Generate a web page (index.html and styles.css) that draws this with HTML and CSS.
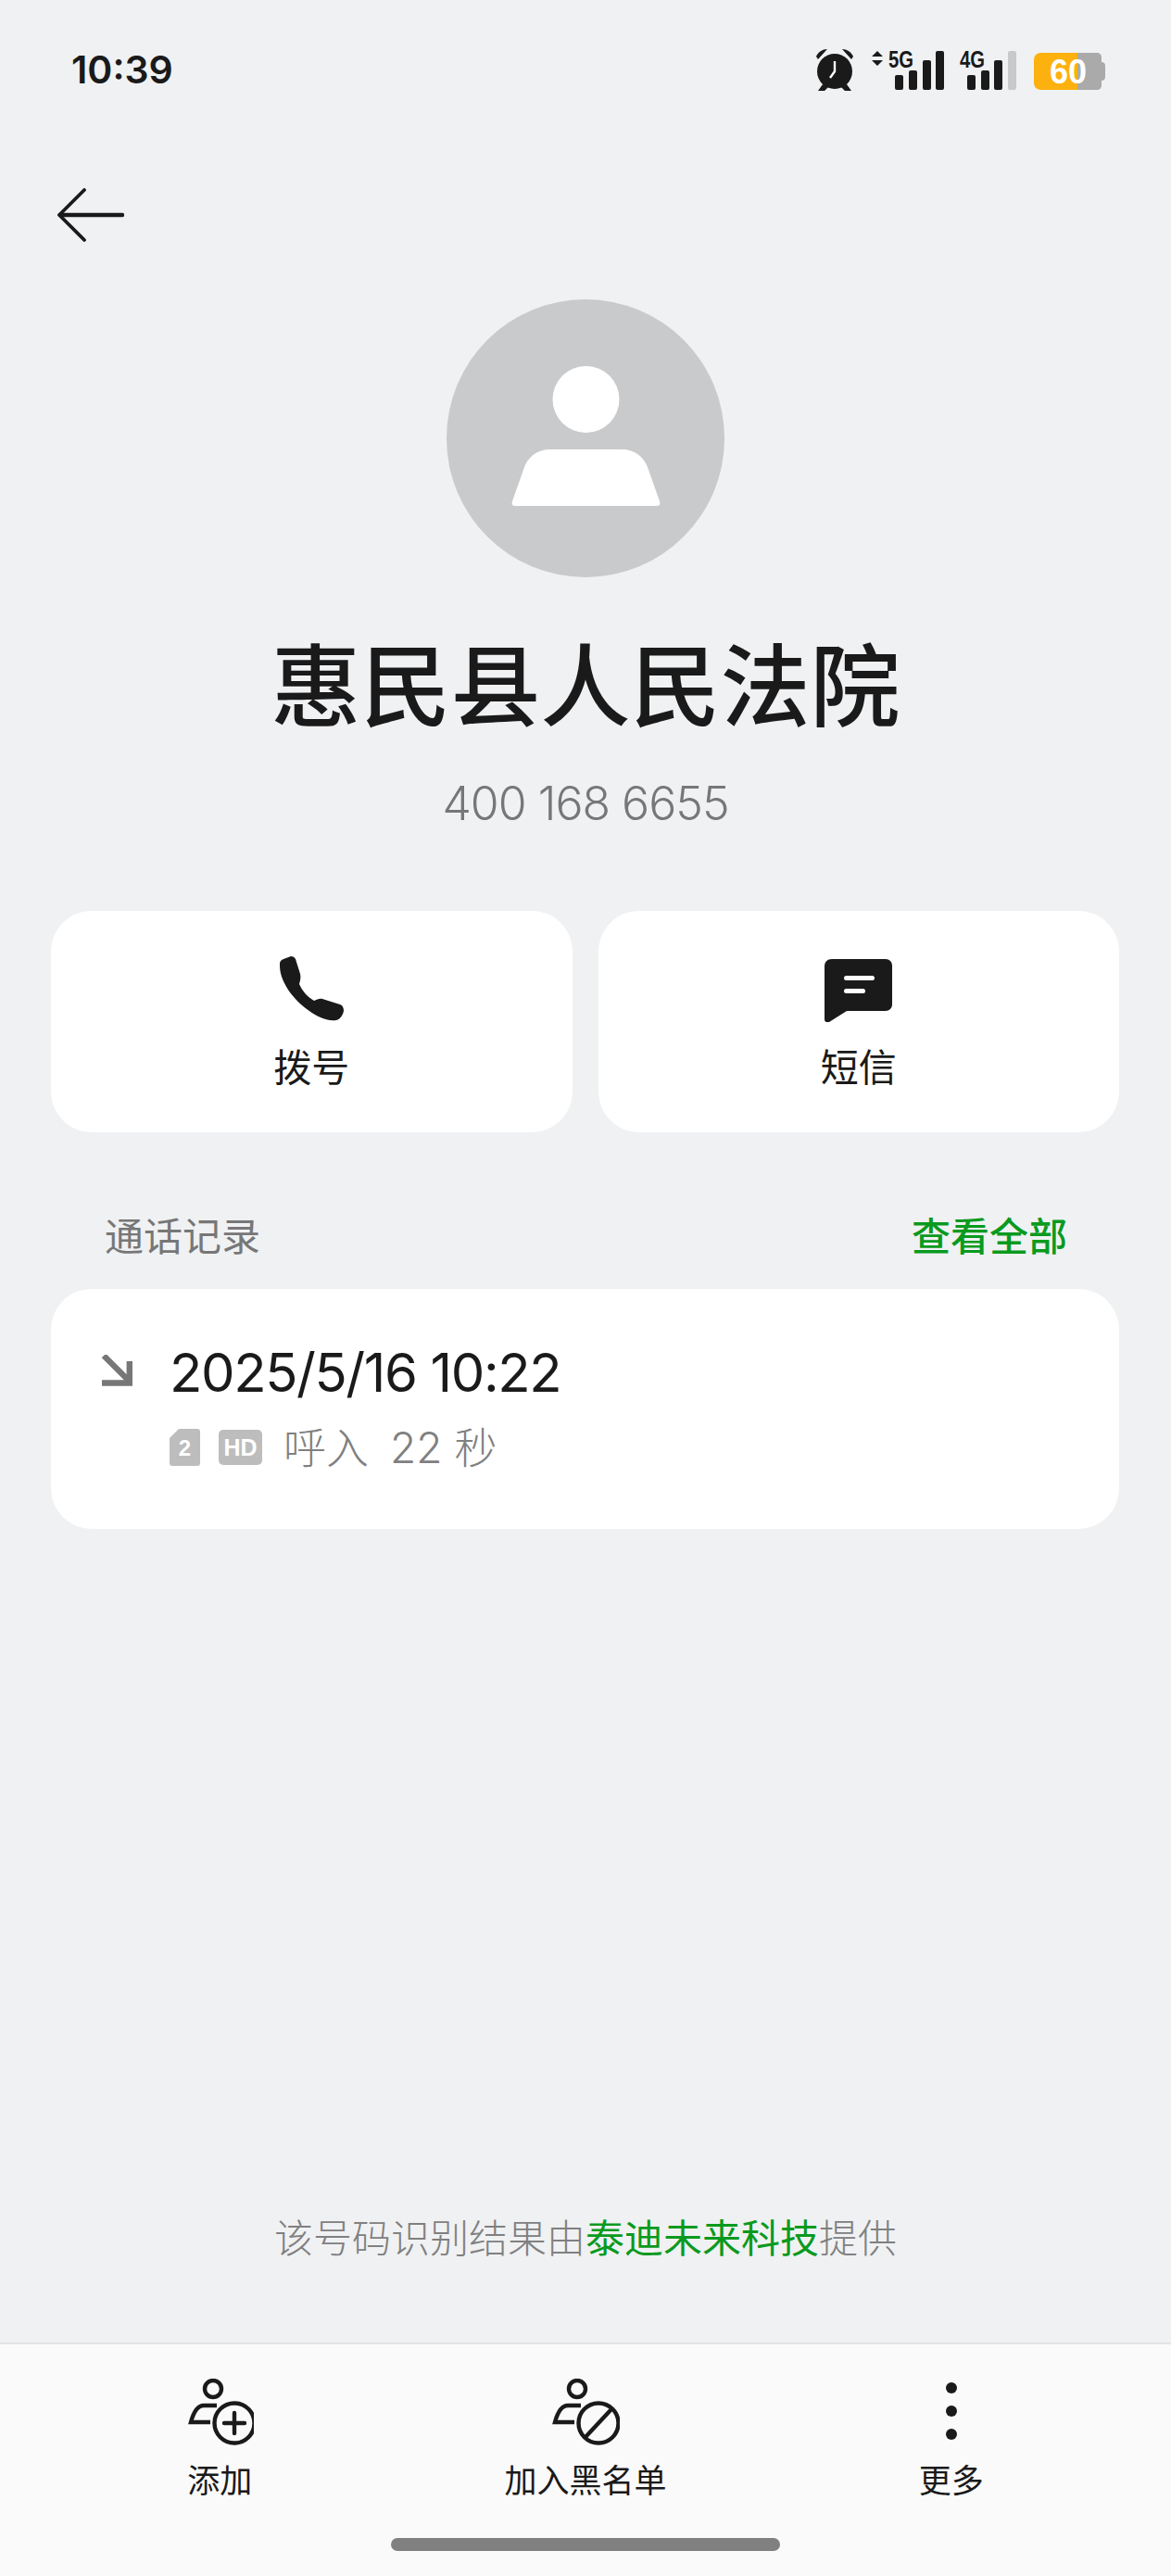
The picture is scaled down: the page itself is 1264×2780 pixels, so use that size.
FILE: index.html
```html
<!DOCTYPE html>
<html lang="zh-CN">
<head>
    <meta charset="UTF-8">
    <meta name="viewport" content="width=device-width, initial-scale=1.0">
    <title>通话详情</title>
    <link rel="stylesheet" href="styles.css">
</head>
<body>
    <div class="page">
        <div class="status-bar">
            <span class="status-time">10:39</span>
            <svg class="status-icons" width="314" height="50" viewBox="880 50 314 50">
                <!-- alarm -->
                <circle cx="901" cy="77" r="19" fill="#1a1a1a"/>
                <path d="M881 61c2-5 7-8 12-8l-10 11zM921 61c-2-5-7-8-12-8l10 11zM888 91l-5 7h7l5-5zM914 91l5 7h-7l-5-5z" fill="#1a1a1a"/>
                <path d="M901 66v11l-5 7" fill="none" stroke="#fff" stroke-width="2.4"/>
                <!-- 5G -->
                <path d="M947 55l6 6h-12zM947 71l6-6h-12z" fill="#1a1a1a"/>
                <text class="net-label" x="959" y="73" textLength="27" lengthAdjust="spacingAndGlyphs">5G</text>
                <rect class="bar" x="966" y="81" width="9" height="16" rx="2"/>
                <rect class="bar" x="981" y="76" width="9" height="21" rx="2"/>
                <rect class="bar" x="996" y="65" width="9" height="32" rx="2"/>
                <rect class="bar" x="1010" y="55" width="9" height="42" rx="2"/>
                <!-- 4G -->
                <text class="net-label" x="1036" y="73" textLength="27" lengthAdjust="spacingAndGlyphs">4G</text>
                <rect class="bar" x="1044" y="81" width="9" height="16" rx="2"/>
                <rect class="bar" x="1059" y="76" width="9" height="21" rx="2"/>
                <rect class="bar" x="1073" y="65" width="9" height="32" rx="2"/>
                <rect class="bar bar-off" x="1088" y="55" width="9" height="42" rx="2"/>
                <!-- battery -->
                <path d="M1163 57h21c3 0 5 2 5 5v5c3 0 4 2 4 4v12c0 2-1 4-4 4v5c0 3-2 5-5 5h-21z" fill="#aaa"/>
                <path d="M1163 57h-39c-5 0-8 3-8 8v24c0 5 3 8 8 8h39z" fill="#fdb10e"/>
                <text class="battery-label" x="1153" y="90">60</text>
            </svg>
        </div>

        <div class="top-bar">
            <svg width="72" height="58" viewBox="0 0 72 58" fill="none" stroke="#1a1a1a" stroke-linecap="round" stroke-linejoin="round">
                <path d="M29 2L2 29l27 27" stroke-width="3.8"/>
                <path d="M3 29h67" stroke-width="4.5"/>
            </svg>
        </div>

        <div class="profile">
            <div class="avatar">
                <svg width="161" height="151" viewBox="0 0 161 151" fill="#fff">
                    <circle cx="80.500" cy="36" r="36"/>
                    <path d="M4 151c-3 0-4-2-3-5l12-34c4-14 15-22 29-22h77c14 0 25 8 29 22l12 34c1 3 0 5-3 5z"/>
                </svg>
            </div>
            <h1 class="name">惠民县人民法院</h1>
            <div class="number">400 168 6655</div>
        </div>

        <div class="actions">
            <div class="action-card">
                <svg width="74" height="72" viewBox="-2 -1 74 72" fill="#1a1a1a">
                    <path d="M1 8C1 5 3 4 5 3L13 0C15 0 17 1 18 3L23 19C24 23 23 26 22 30C25 37 31 44 38 48C41 47 44 45 47 46L66 52C69 53 70 56 70 59C69 64 66 68 62 69C56 70 50 68 45 66C28 58 10 42 3 22C1 16 1 12 1 8Z"/>
                </svg>
                <span class="action-label">拨号</span>
            </div>
            <div class="action-card">
                <svg width="74" height="72" viewBox="0 -4 74 72">
                    <path d="M8 0H66C70 0 73 3 73 7V49C73 53 70 56 66 56H24L5 68C3 69 0 68 0 65V8C0 3 3 0 8 0Z" fill="#1a1a1a"/>
                    <rect x="21" y="18" width="33" height="5" rx="2.500" fill="#fff"/>
                    <rect x="21" y="32" width="23" height="5" rx="2.500" fill="#fff"/>
                </svg>
                <span class="action-label">短信</span>
            </div>
        </div>

        <div class="section-head">
            <span class="section-title">通话记录</span>
            <span class="section-link">查看全部</span>
        </div>

        <div class="call-card">
            <svg class="call-arrow" width="34" height="34" viewBox="0 0 34 34" fill="none" stroke="#777" stroke-width="6.4">
                <path d="M3 1l27 27"/>
                <path d="M1 30.500h29.800V7"/>
            </svg>
            <div class="call-info">
                <div class="call-date">2025/5/16 10:22</div>
                <div class="call-meta">
                    <svg class="sim-icon" width="33" height="40" viewBox="0 0 33 40">
                        <path d="M10 0h20c2 0 3 1 3 3v34c0 2-1 3-3 3H3c-2 0-3-1-3-3V10z" fill="#bdbdbd"/>
                        <text class="sim-label" x="16.500" y="29">2</text>
                    </svg>
                    <span class="hd-badge">HD</span>
                    <span class="call-text">呼入</span>
                    <span class="call-text">22 秒</span>
                </div>
            </div>
        </div>

        <div class="source-note">该号码识别结果由<span class="green">泰迪未来科技</span>提供</div>

        <div class="bottom-bar">
            <div class="tabs">
                <div class="tab">
                    <svg width="74" height="72" viewBox="-3 0 74 72" fill="none" stroke="#1a1a1a" stroke-width="4.400">
                        <circle cx="27" cy="11" r="9"/>
                        <path d="M31 29H17C10 29 6 36 3 47h21"/>
                        <circle cx="50" cy="48" r="21.500"/>
                        <path d="M50 37v22M39 48h22" stroke-linecap="round"/>
                    </svg>
                    <span class="tab-label">添加</span>
                </div>
                <div class="tab">
                    <svg width="74" height="72" viewBox="-1 0 74 72" fill="none" stroke="#1a1a1a" stroke-width="4.400">
                        <circle cx="27" cy="11" r="9"/>
                        <path d="M31 29H17C10 29 6 36 3 47h21"/>
                        <circle cx="50" cy="48" r="21.500"/>
                        <path d="M36 63l28-30"/>
                    </svg>
                    <span class="tab-label">加入黑名单</span>
                </div>
                <div class="tab">
                    <svg width="74" height="72" viewBox="0 0 74 72" fill="#1a1a1a">
                        <circle cx="37" cy="10" r="6"/>
                        <circle cx="37" cy="35" r="6"/>
                        <circle cx="37" cy="60" r="6"/>
                    </svg>
                    <span class="tab-label">更多</span>
                </div>
            </div>
            <div class="home-bar"></div>
        </div>
    </div>
</body>
</html>
```

FILE: styles.css
```css
* {
    box-sizing: border-box;
}
body {
    margin: 0;
    background-color: #f0f1f3;
    font-family: Inter, "Noto Sans CJK SC", sans-serif;
    color: #1a1a1a;
}
.page {
    display: flex;
    flex-direction: column;
    height: 2780px;
}

.status-bar {
    display: flex;
    align-items: center;
    justify-content: space-between;
    height: 50px;
    margin-top: 50px;
    padding: 0 70px 0 77px;
}
.status-time {
    font-size: 41px;
    font-weight: 600;
}
.status-icons text {
    font-family: "Liberation Sans", sans-serif;
    font-weight: 700;
}
.net-label {
    font-size: 25px;
    fill: #1a1a1a;
}
.bar {
    fill: #1a1a1a;
}
.bar-off {
    fill: #c9c9c9;
}
.battery-label {
    font-size: 36px;
    fill: #fff;
    text-anchor: middle;
}

.top-bar {
    padding: 103px 0 0 62px;
    line-height: 0;
}

.profile {
    display: flex;
    flex-direction: column;
    align-items: center;
    margin-top: 62px;
}
.avatar {
    display: flex;
    align-items: center;
    justify-content: center;
    width: 300px;
    height: 300px;
    padding-bottom: 6px;
    border-radius: 50%;
    background-color: #c9cacc;
}
.name {
    margin: 58px 0 0;
    font-size: 97px;
    font-weight: 500;
    line-height: 120px;
}
.number {
    margin-top: 36px;
    font-size: 50px;
    font-weight: 300;
    letter-spacing: -1px;
    line-height: 60px;
    color: #777;
}

.actions {
    display: grid;
    grid-template-columns: 1fr 1fr;
    gap: 28px;
    margin: 86px 56px 0 55px;
}
.action-card {
    display: flex;
    flex-direction: column;
    align-items: center;
    height: 239px;
    padding-top: 48px;
    border-radius: 44px;
    background-color: #fff;
}
.action-label {
    margin-top: 21px;
    font-size: 41px;
    line-height: 56px;
}

.section-head {
    display: flex;
    align-items: center;
    justify-content: space-between;
    margin-top: 85px;
    padding: 0 112px 0 113px;
    font-size: 42px;
    line-height: 56px;
}
.section-title {
    color: #777;
}
.section-link {
    color: #0a9a1e;
    font-weight: 500;
}

.call-card {
    display: flex;
    height: 259px;
    margin: 28px 56px 0 55px;
    padding: 55px 0 0 54px;
    border-radius: 44px;
    background-color: #fff;
}
.call-arrow {
    margin-top: 16px;
}
.call-info {
    margin-left: 40px;
}
.call-date {
    font-size: 58px;
    letter-spacing: -1.400px;
    line-height: 70px;
}
.call-meta {
    display: flex;
    align-items: center;
    gap: 20px;
    margin-top: 18px;
}
.sim-label {
    font-family: "Liberation Sans", sans-serif;
    font-size: 24px;
    font-weight: 700;
    fill: #fff;
    text-anchor: middle;
}
.hd-badge {
    width: 47px;
    height: 38px;
    border-radius: 5px;
    background-color: #bdbdbd;
    font-family: "Liberation Sans", sans-serif;
    font-size: 25px;
    font-weight: 700;
    line-height: 38px;
    text-align: center;
    color: #fff;
}
.call-text {
    margin-left: 3px;
    font-size: 46px;
    font-weight: 300;
    line-height: 56px;
    color: #808080;
}

.source-note {
    margin-top: auto;
    margin-bottom: 84px;
    font-size: 42px;
    line-height: 56px;
    font-weight: 300;
    text-align: center;
    color: #808080;
}
.green {
    color: #0a9a1e;
    font-weight: 400;
}

.bottom-bar {
    display: flex;
    flex-direction: column;
    align-items: center;
    height: 252px;
    border-top: 2px solid #e4e4e4;
    background-color: #fafafa;
}
.tabs {
    display: grid;
    grid-template-columns: repeat(3, 1fr);
    width: 1184px;
    padding-top: 37px;
}
.tab {
    display: flex;
    flex-direction: column;
    align-items: center;
}
.tab-label {
    margin-top: 14px;
    font-size: 35px;
    line-height: 48px;
}
.home-bar {
    width: 420px;
    height: 14px;
    margin-top: 38px;
    border-radius: 7px;
    background-color: #808080;
}
```
